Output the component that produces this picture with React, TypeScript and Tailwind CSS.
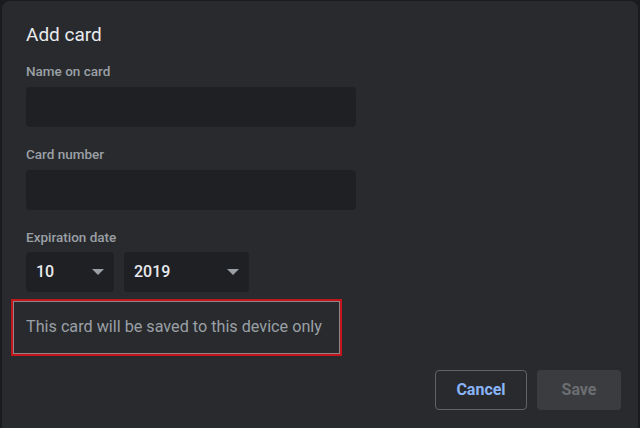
import React from "react";

const Caret = () => (
  <svg width="12" height="6" viewBox="0 0 12 6" className="fill-[#9aa0a6]">
    <path d="M0 0h12L6 6z" />
  </svg>
);

const Field = ({ label }: { label: string }) => (
  <div className="flex flex-col">
    <div className="text-[13.5px] font-medium leading-[16px] text-[#9aa0a6]">{label}</div>
    <div className="mt-[8px] h-[40px] w-[330px] rounded-[4px] bg-[#1f2023]" />
  </div>
);

const Select = ({ value, width }: { value: string; width: string }) => (
  <div className={`flex h-[40px] items-center justify-between rounded-[4px] bg-[#1f2023] pl-[10px] pr-[10px] ${width}`}>
    <span className="text-[16px] font-medium text-[#e8eaed]">{value}</span>
    <Caret />
  </div>
);

export default function App() {
  return (
    <div className="h-[428px] w-[640px] overflow-hidden bg-[#1a1b1e] pl-[2px] pt-[1px] pr-[2px]" style={{ fontFamily: "Roboto, 'Liberation Sans', sans-serif" }}>
      <div className="h-[440px] rounded-[8px] bg-[#292a2d] pt-[22px]">
        <div className="pl-[24px]">
          <div className="text-[19px] leading-[24px] text-[#e8eaed]">Add card</div>
          <div className="mt-[16px] flex flex-col gap-[19px]">
            <Field label="Name on card" />
            <Field label="Card number" />
            <div className="flex flex-col">
              <div className="text-[13.5px] font-medium leading-[16px] text-[#9aa0a6]">Expiration date</div>
              <div className="mt-[7px] flex gap-[10px]">
                <Select value="10" width="w-[88px]" />
                <Select value="2019" width="w-[125px]" />
              </div>
            </div>
          </div>
        </div>
        <div className="ml-[9px] mt-[7px] flex h-[57px] w-[331px] items-center border-2 border-[#c3161c] pl-[13px] shadow-[inset_0_0_0_1px_rgba(255,220,220,0.5)]">
          <span className="text-[16.2px] text-[#9aa0a6]">This card will be saved to this device only</span>
        </div>
        <div className="mt-[14px] flex justify-end gap-[10px] pr-[17px]">
          <button className="h-[40px] w-[92px] rounded-[4px] border border-[#5f6368] text-[16px] font-bold text-[#8ab4f8]">Cancel</button>
          <button className="h-[40px] w-[84px] rounded-[4px] bg-[#3b3c3f] text-[16px] font-bold text-[#6b6e72]">Save</button>
        </div>
      </div>
    </div>
  );
}
